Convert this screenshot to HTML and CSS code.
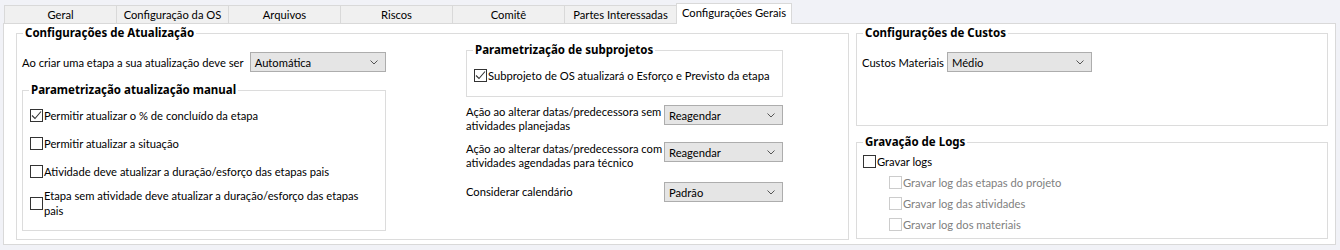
FILE: index.html
```html
<!DOCTYPE html>
<html lang="pt-BR">
<head>
	<meta charset="utf-8">
	<title>Configurações Gerais</title>
	<link rel="stylesheet" href="styles.css">
</head>
<body>

	<div class="tabs">
		<div class="tab">Geral</div>
		<div class="tab">Configuração da OS</div>
		<div class="tab">Arquivos</div>
		<div class="tab">Riscos</div>
		<div class="tab">Comitê</div>
		<div class="tab">Partes Interessadas</div>
		<div class="tab active">Configurações Gerais</div>
	</div>

	<div class="panel">

		<fieldset class="group main">
			<legend>Configurações de Atualização</legend>
			<div class="cols">

				<div class="col-left">
					<div class="field first">
						<label class="lbl-create">Ao criar uma etapa a sua atualização deve ser</label>
						<div class="combo combo-create">
							<span>Automática</span>
							<svg width="8" height="5" viewBox="0 0 8 5"><polyline points="0.5,0.5 4,4 7.5,0.5" fill="none" stroke="#555" stroke-width="1"/></svg>
						</div>
					</div>

					<fieldset class="group manual">
						<legend>Parametrização atualização manual</legend>
						<div class="check">
							<span class="box"><svg width="11" height="11" viewBox="0 0 11 11"><polyline points="1,5.5 4,8.5 10,1.5" fill="none" stroke="#333" stroke-width="1.1"/></svg></span>
							<span>Permitir atualizar o % de concluído da etapa</span>
						</div>
						<div class="check">
							<span class="box"></span>
							<span>Permitir atualizar a situação</span>
						</div>
						<div class="check">
							<span class="box"></span>
							<span>Atividade deve atualizar a duração/esforço das etapas pais</span>
						</div>
						<div class="check two-lines">
							<span class="box"></span>
							<span class="wrap">Etapa sem atividade deve atualizar a duração/esforço das etapas pais</span>
						</div>
					</fieldset>
				</div>

				<div class="col-right">
					<fieldset class="group sub">
						<legend>Parametrização de subprojetos</legend>
						<div class="check">
							<span class="box"><svg width="11" height="11" viewBox="0 0 11 11"><polyline points="1,5.5 4,8.5 10,1.5" fill="none" stroke="#333" stroke-width="1.1"/></svg></span>
							<span>Subprojeto de OS atualizará o Esforço e Previsto da etapa</span>
						</div>
					</fieldset>

					<div class="field action row1">
						<label class="lbl-action">Ação ao alterar datas/predecessora sem atividades planejadas</label>
						<div class="combo combo-action">
							<span>Reagendar</span>
							<svg width="8" height="5" viewBox="0 0 8 5"><polyline points="0.5,0.5 4,4 7.5,0.5" fill="none" stroke="#555" stroke-width="1"/></svg>
						</div>
					</div>
					<div class="field action row2">
						<label class="lbl-action">Ação ao alterar datas/predecessora com atividades agendadas para técnico</label>
						<div class="combo combo-action">
							<span>Reagendar</span>
							<svg width="8" height="5" viewBox="0 0 8 5"><polyline points="0.5,0.5 4,4 7.5,0.5" fill="none" stroke="#555" stroke-width="1"/></svg>
						</div>
					</div>
					<div class="field single row3">
						<label class="lbl-action">Considerar calendário</label>
						<div class="combo combo-action">
							<span>Padrão</span>
							<svg width="8" height="5" viewBox="0 0 8 5"><polyline points="0.5,0.5 4,4 7.5,0.5" fill="none" stroke="#555" stroke-width="1"/></svg>
						</div>
					</div>
				</div>

			</div>
		</fieldset>

		<div class="side">
			<fieldset class="group costs">
				<legend>Configurações de Custos</legend>
				<div class="field">
					<label class="lbl-costs">Custos Materiais</label>
					<div class="combo combo-costs">
						<span>Médio</span>
						<svg width="8" height="5" viewBox="0 0 8 5"><polyline points="0.5,0.5 4,4 7.5,0.5" fill="none" stroke="#555" stroke-width="1"/></svg>
					</div>
				</div>
			</fieldset>

			<fieldset class="group logs">
				<legend>Gravação de Logs</legend>
				<div class="check">
					<span class="box"></span>
					<span>Gravar logs</span>
				</div>
				<div class="check disabled indent">
					<span class="box"></span>
					<span>Gravar log das etapas do projeto</span>
				</div>
				<div class="check disabled indent">
					<span class="box"></span>
					<span>Gravar log das atividades</span>
				</div>
				<div class="check disabled indent">
					<span class="box"></span>
					<span>Gravar log dos materiais</span>
				</div>
			</fieldset>
		</div>

	</div>

</body>
</html>
```

FILE: styles.css
```css
body {
	margin: 0;
	background-color: #f1f2f7;
	font-family: Lato, "Noto Sans", sans-serif;
	font-size: 11.2px;
	color: #000;
}

/* tab strip */
.tabs {
	display: flex;
	align-items: flex-end;
	height: 23px;
	padding-left: 4px;
	box-sizing: border-box;
}
.tab {
	width: 113px;
	height: 18px;
	margin-right: -1px;
	box-sizing: border-box;
	border: 1px solid #d9d9d9;
	border-bottom: none;
	background-color: #f0f0f0;
	text-align: center;
	line-height: 17px;
	white-space: nowrap;
}
.tab.active {
	position: relative;
	z-index: 1;
	width: 116px;
	height: 21px;
	margin-bottom: -1px;
	background-color: #fff;
	line-height: 18px;
}

/* page body */
.panel {
	display: flex;
	gap: 7px;
	width: 1333px;
	height: 222px;
	margin-left: 3px;
	padding: 1px 7px 4px 12px;
	box-sizing: border-box;
	border: 1px solid #d9d9d9;
	background-color: #fff;
}

.group {
	margin: 0;
	min-width: 0;
	box-sizing: border-box;
	border: 1px solid #dcdcdc;
}
.group legend {
	padding: 0 2px;
	font-family: "Noto Sans", sans-serif;
	font-size: 11.5px;
	font-weight: bold;
	line-height: 16px;
}

.main {
	width: 833px;
	padding: 1px 5px 0 5px;
}
.main legend {
	margin-left: 1px;
}
.cols {
	display: flex;
	gap: 80px;
}
.col-left {
	width: 364px;
}
.col-right {
	width: 317px;
}

.field {
	display: flex;
	align-items: center;
}
.field.first {
	margin-top: 10px;
}
.lbl-create {
	width: 229px;
	white-space: nowrap;
}
.lbl-action {
	width: 198px;
	line-height: 14px;
}
.lbl-costs {
	width: 85px;
	white-space: nowrap;
}
.action {
	align-items: flex-start;
}
.row1 {
	margin-top: 8px;
}
.row2 {
	margin-top: 9px;
}
.row3 {
	margin-top: 12px;
}

.combo {
	display: flex;
	align-items: center;
	justify-content: space-between;
	height: 20px;
	padding: 0 7px 0 4px;
	box-sizing: border-box;
	border: 1px solid #adadad;
	background-color: #e5e5e5;
}
.combo-create {
	width: 137px;
}
.combo-action {
	width: 119px;
}
.combo-costs {
	width: 145px;
}

.manual {
	width: 364px;
	margin-top: 10px;
	padding: 9px 7px 12px 7px;
}
.manual legend {
	margin-left: -1px;
}
.manual .check + .check {
	margin-top: 12px;
}
.manual .two-lines {
	margin-top: 9px !important;
}

.sub {
	width: 317px;
	padding: 9px 7px 13px 7px;
}
.sub legend {
	margin-left: -1px;
}

/* checkboxes */
.check {
	display: flex;
	align-items: center;
	gap: 1px;
	height: 16px;
	white-space: nowrap;
}
.box {
	display: flex;
	align-items: center;
	justify-content: center;
	flex: none;
	width: 13px;
	height: 13px;
	box-sizing: border-box;
	border: 1px solid #333;
	background-color: #fff;
}
.two-lines {
	height: 30px;
}
.wrap {
	width: 322px;
	white-space: normal;
	line-height: 15px;
}
.disabled {
	color: #808080;
}
.disabled .box {
	border-color: #cccccc;
}
.indent {
	margin-left: 26px;
}

/* right side */
.side {
	display: flex;
	flex-direction: column;
	width: 472px;
}
.costs {
	height: 101px;
	padding: 11px 5px 0 5px;
}
.costs legend {
	margin-left: 1px;
}
.logs {
	height: 105px;
	margin-top: 8px;
	padding: 3px 6px 0 6px;
}
.logs legend {
	margin-left: 0;
}
.logs .check + .check {
	margin-top: 5px;
}
```
